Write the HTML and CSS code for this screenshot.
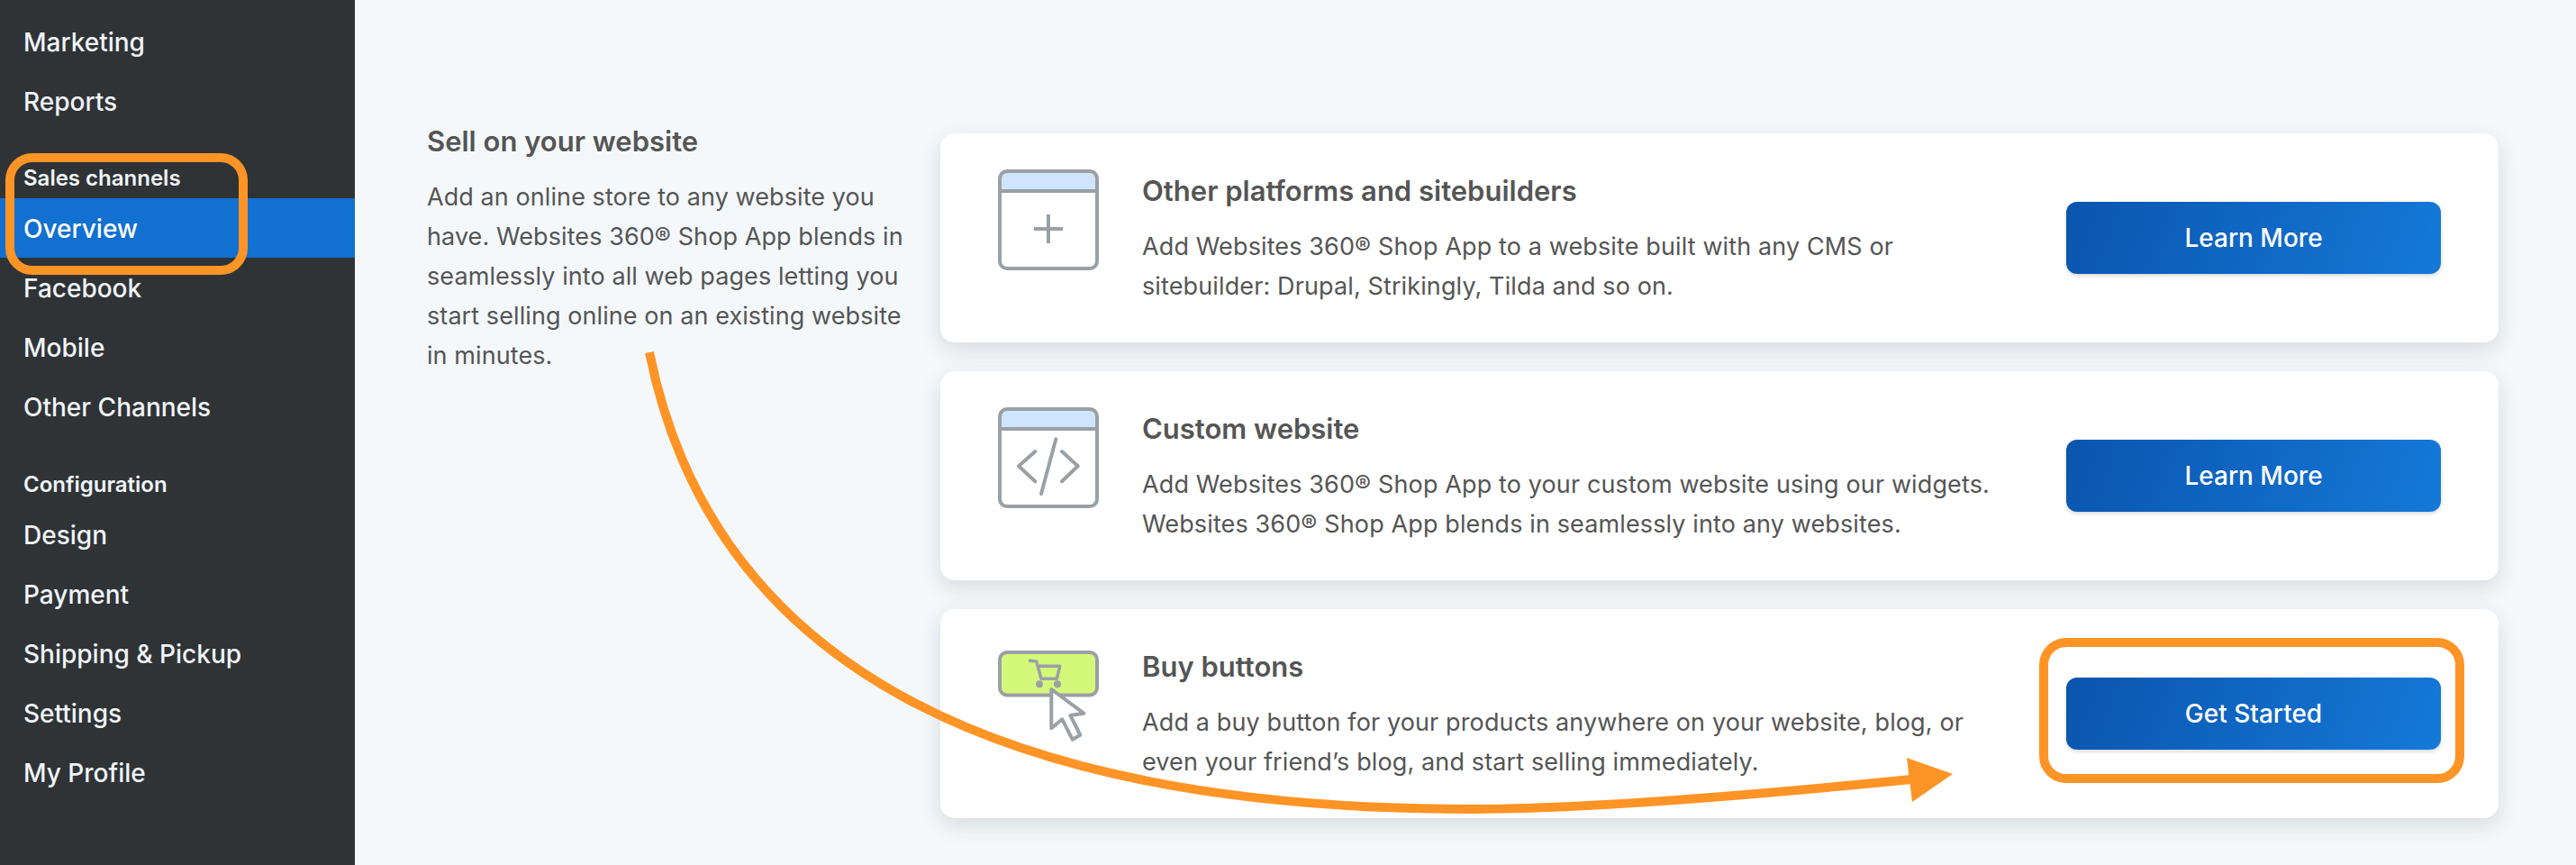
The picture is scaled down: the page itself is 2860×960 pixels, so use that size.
FILE: index.html
```html
<!doctype html>
<html>
<head>
<meta charset="utf-8" />
<title>Sales channels</title>
<link rel="stylesheet" href="styles.css">
</head>
<body>
	<div class="wrap">
		<nav class="side">
			<a class="item" href="#">Marketing</a>
			<a class="item" href="#">Reports</a>
			<div class="label">Sales channels</div>
			<a class="item on" href="#">Overview</a>
			<a class="item" href="#">Facebook</a>
			<a class="item" href="#">Mobile</a>
			<a class="item" href="#">Other Channels</a>
			<div class="label label-2">Configuration</div>
			<a class="item" href="#">Design</a>
			<a class="item" href="#">Payment</a>
			<a class="item" href="#">Shipping &amp; Pickup</a>
			<a class="item" href="#">Settings</a>
			<a class="item" href="#">My Profile</a>
		</nav>
		<main class="main">
			<section class="intro">
				<h2>Sell on your website</h2>
				<p>Add an online store to any website you have. Websites 360® Shop App blends in seamlessly into all web pages letting you start selling online on an existing website in minutes.</p>
			</section>
			<section class="cards">
				<div class="card">
					<svg class="ico" width="112" height="112" viewBox="0 0 112 112">
						<path class="top" d="M10 2h92a8 8 0 0 1 8 8v14H2V10a8 8 0 0 1 8-8z" />
						<rect class="line" x="2" y="2" width="108" height="108" rx="8" />
						<path class="line" d="M2 24h108M56 50v32M40 66h32" />
					</svg>
					<div class="txt">
						<h3>Other platforms and sitebuilders</h3>
						<p>Add Websites 360® Shop App to a website built with any CMS or sitebuilder: Drupal, Strikingly, Tilda and so on.</p>
					</div>
					<a class="btn" href="#">Learn More</a>
				</div>
				<div class="card">
					<svg class="ico" width="112" height="112" viewBox="0 0 112 112">
						<path class="top" d="M10 2h92a8 8 0 0 1 8 8v14H2V10a8 8 0 0 1 8-8z" />
						<rect class="line" x="2" y="2" width="108" height="108" rx="8" />
						<path class="line" d="M2 24h108" />
						<path class="line rnd" d="M41.3 49L23 65.3l18.3 17M71 49l17.7 16.3L71 82.3M64.3 35.3L48 96" />
					</svg>
					<div class="txt">
						<h3>Custom website</h3>
						<p>Add Websites 360® Shop App to your custom website using our widgets. Websites 360® Shop App blends in seamlessly into any websites.</p>
					</div>
					<a class="btn" href="#">Learn More</a>
				</div>
				<div class="card">
					<svg class="ico" width="112" height="112" viewBox="0 0 112 112">
						<rect class="line lime" x="2" y="8" width="108" height="47.5" rx="8" />
						<path class="line rnd thin" d="M35.3 17.3l7.4.7 5.3 19.3h17.3l3.4-14H44.7" />
						<circle class="dot" cx="46" cy="43.3" r="4" />
						<circle class="dot" cx="66" cy="43.3" r="4" />
						<path class="line rnd arrow" d="M59.3 49v43.3l12-10 11.4 22.4 8.6-5L80.3 78l15-2.3z" />
					</svg>
					<div class="txt">
						<h3>Buy buttons</h3>
						<p>Add a buy button for your products anywhere on your website, blog, or even your friend’s blog, and start selling immediately.</p>
					</div>
					<a class="btn" href="#">Get Started</a>
				</div>
			</section>
		</main>
	</div>

	<!-- annotations drawn on top of the screenshot -->
	<div class="mark mark-nav"></div>
	<div class="mark mark-btn"></div>
	<svg class="curve" width="2860" height="960" viewBox="0 0 2860 960">
		<path class="curve-line" d="M721 391C790 735 1100 898 1634 898C1750 898 1950 882 2122 865" />
		<path class="curve-head" d="M2117 841L2168 859L2123 890z" />
	</svg>
</body>
</html>
```

FILE: styles.css
```css
html,body{margin:0; padding:0; height:960px; overflow:hidden;}
body{background:#f4f8fb; font-family:"Inter","Liberation Sans",sans-serif; color:#555;}
h2,h3,p{margin:0;}
.wrap{display:flex; height:960px;}

/* sidebar */
.side{width:394px; flex:none; box-sizing:border-box; padding-top:13px; background:#2f3336;}
.item{display:block; height:66px; padding-left:26px; font-size:28px; font-weight:500; line-height:68px; color:#f0f4f8; text-decoration:none;}
.item.on{background:#1270d0; color:#fff;}
.label{height:40px; margin-top:32px; margin-bottom:3px; padding-left:26px; font-size:24px; font-weight:600; line-height:42px; color:#f0f4f8;}
.label-2{margin-top:33px;}

/* main */
.main{flex:1; display:flex; box-sizing:border-box; padding:139px 86px 0 80px;}
.intro{width:570px; flex:none;}
.intro h2{font-size:31px; font-weight:600; line-height:36px;}
.intro p{width:545px; margin-top:22px; font-size:27px; letter-spacing:.08px; line-height:44px;}
.cards{flex:1; display:flex; flex-direction:column; gap:32px; padding-top:9px;}
.card{display:flex; align-items:center; height:232px; box-sizing:border-box; padding:0 64px; background:#fff; border-radius:16px; box-shadow:0 8px 24px rgba(40,50,60,.14);}
.ico{flex:none; align-self:flex-start; margin-top:40px;}
.txt{flex:1; align-self:flex-start; padding-top:46px; margin-left:48px;}
.txt h3{font-size:31px; font-weight:600; line-height:36px;}
.txt p{width:950px; margin-top:22px; font-size:27px; letter-spacing:.12px; line-height:44px;}
.btn{flex:none; width:416px; height:80px; border-radius:12px; background:linear-gradient(110deg,#0a55ae,#1579d8); box-shadow:0 2px 4px rgba(0,0,0,.16); font-size:28px; font-weight:500; line-height:80px; text-align:center; color:#fff; text-decoration:none;}

/* icons */
.line{fill:none; stroke:#9aa0a5; stroke-width:4;}
.top{fill:#cfe5fd;}
.rnd{stroke-linecap:round; stroke-linejoin:round;}
.thin{stroke-width:3.5;}
.lime{fill:#d4f87a;}
.arrow{fill:#fff;}
.dot{fill:#9aa0a5;}

/* orange marks */
.mark{position:absolute; box-sizing:border-box; border:10px solid #ff9426; border-radius:30px;}
.mark-nav{left:6px; top:170px; width:269px; height:135px;}
.mark-btn{left:2264px; top:708px; width:472px; height:161px;}
.curve{position:absolute; left:0; top:0;}
.curve-line{fill:none; stroke:#ff9426; stroke-width:10;}
.curve-head{fill:#ff9426;}
```
